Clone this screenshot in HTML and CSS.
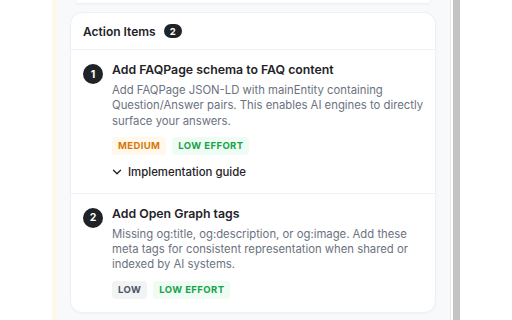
FILE: index.html
```html
<!DOCTYPE html>
<html lang="en">
<head>
    <meta charset="UTF-8">
    <meta name="viewport" content="width=device-width, initial-scale=1.0">
    <title>Action Items</title>
    <link rel="stylesheet" href="styles.css">
</head>
<body>
    <div class="gutter"></div>
    <div class="panel">
        <div class="card-tail"></div>

        <div class="card">
            <div class="card-header">
                <h3>Action Items</h3>
                <span class="count">2</span>
            </div>

            <div class="item">
                <span class="num">1</span>
                <div class="item-body">
                    <h4>Add FAQPage schema to FAQ content</h4>
                    <p>Add FAQPage JSON-LD with mainEntity containing Question/Answer pairs. This enables AI engines to directly surface your answers.</p>
                    <div class="tags">
                        <span class="tag medium">Medium</span>
                        <span class="tag effort">Low effort</span>
                    </div>
                    <div class="guide">
                        <svg width="10" height="10" viewBox="0 0 10 10"><path d="M1.5 3.2 L5 6.7 L8.5 3.2" fill="none" stroke="#1f2328" stroke-width="1.4" stroke-linecap="round" stroke-linejoin="round"/></svg>
                        <span>Implementation guide</span>
                    </div>
                </div>
            </div>

            <div class="item">
                <span class="num">2</span>
                <div class="item-body">
                    <h4>Add Open Graph tags</h4>
                    <p>Missing og:title, og:description, or og:image. Add these meta tags for consistent representation when shared or indexed by AI systems.</p>
                    <div class="tags">
                        <span class="tag low">Low</span>
                        <span class="tag effort">Low effort</span>
                    </div>
                </div>
            </div>
        </div>
    </div>
    <div class="scrollbar"></div>
</body>
</html>
```

FILE: styles.css
```css
/* Base */
body {
    margin: 0;
    height: 320px;
    display: flex;
    font-family: 'Inter', 'Noto Sans', sans-serif;
    background-color: #fff;
    color: #1f2328;
    overflow: hidden;
}

.gutter {
    width: 52px;
    flex-shrink: 0;
}

/* Side panel */
.panel {
    width: 366px;
    flex-shrink: 0;
    padding: 0 14px 0 13px;
    background-color: #f8f9fa;
    border-left: 5px solid #fef8ec;
    border-right: 1px solid #e6e7e9;
    overflow: hidden;
}

.scrollbar {
    width: 7px;
    margin-left: 2px;
    background-color: #c4c4c4;
}

/* Bottom of the previous card */
.card-tail {
    height: 3px;
    margin: 0 6px;
    background-color: #fff;
    border-radius: 0 0 12px 12px;
    box-shadow: 0 1px 3px rgba(0, 0, 0, 0.06);
}

/* Card */
.card {
    margin-top: 9px;
    background-color: #fff;
    border: 1px solid #eff0f2;
    border-radius: 12px;
    box-shadow: 0 1px 2px rgba(0, 0, 0, 0.03);
}

.card-header {
    display: flex;
    align-items: center;
    gap: 8px;
    height: 36px;
    padding: 0 12px;
    border-bottom: 1px solid #f1f2f4;
}

.card-header h3 {
    margin: 0;
    font-size: 12px;
    font-weight: 600;
}

.count {
    display: inline-flex;
    align-items: center;
    justify-content: center;
    width: 18px;
    height: 14px;
    border-radius: 7px;
    background-color: #1f2328;
    color: #fff;
    font-size: 9.5px;
    font-weight: 700;
}

/* Items */
.item {
    display: flex;
    gap: 9px;
    padding: 12px 6px 13px 12px;
    border-bottom: 1px solid #f1f2f4;
}

.item:last-child {
    border-bottom: none;
    padding-bottom: 13px;
}

.num {
    display: inline-flex;
    align-items: center;
    justify-content: center;
    flex-shrink: 0;
    width: 20px;
    height: 20px;
    margin-top: 2px;
    border-radius: 50%;
    background-color: #1f2328;
    color: #fff;
    font-size: 10.5px;
    font-weight: 700;
}

.item-body h4 {
    margin: 0;
    font-size: 12.3px;
    font-weight: 600;
    line-height: 16px;
}

.item-body p {
    margin: 5px 0 0;
    font-size: 11.3px;
    line-height: 15.3px;
    color: #6b7280;
}

.tags {
    display: flex;
    gap: 6px;
    margin-top: 8px;
}

.tag {
    display: inline-flex;
    align-items: center;
    height: 18px;
    padding: 0 6px;
    border-radius: 4px;
    font-size: 9.5px;
    font-weight: 700;
    letter-spacing: 0.4px;
    text-transform: uppercase;
}

.tag.medium {
    color: #d97706;
    background-color: #fff8eb;
}

.tag.effort {
    color: #16a34a;
    background-color: #effcf3;
}

.tag.low {
    color: #4b5563;
    background-color: #f2f3f5;
}

.guide {
    display: flex;
    align-items: center;
    gap: 6px;
    margin-top: 9px;
    line-height: 16px;
    font-size: 11.4px;
    font-weight: 500;
}
```
